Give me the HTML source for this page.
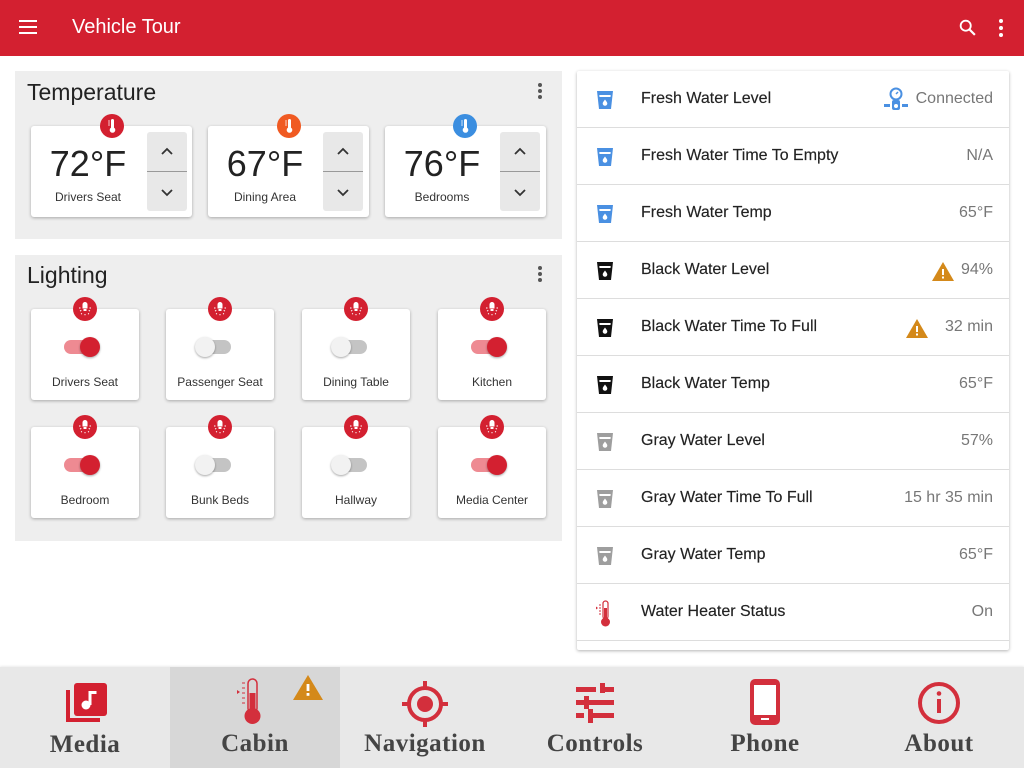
<!DOCTYPE html>
<html><head><style>
*{margin:0;padding:0;box-sizing:border-box}
body{width:1024px;height:768px;overflow:hidden;background:#fff;font-family:"Liberation Sans",sans-serif;position:relative}
.a{position:absolute}
.hdr{left:0;top:0;width:1024px;height:56px;background:#d32030;color:#fff}
.panel{background:#eeeeee}
.card{background:#fff;border-radius:3px;box-shadow:0 1px 3px rgba(0,0,0,.3)}
.badge{width:24px;height:24px;border-radius:50%;display:flex;align-items:center;justify-content:center}
.t{font-size:36px;color:#222;text-align:center}
.lbl{font-size:12px;color:#333;text-align:center}
.step{background:#e8e8e8;border-radius:3px}
.tog{width:32px;height:14px;border-radius:7px}
.knob{width:20px;height:20px;border-radius:50%;box-shadow:0 1px 2px rgba(0,0,0,.35)}
.row{left:577px;width:432px;height:57px;border-bottom:1px solid #ddd}
.rt{left:64px;top:19px;font-size:16px;color:#222;-webkit-text-stroke:.15px #222}
.rv{right:16px;top:19px;font-size:16px;color:#777}
.nav{font-family:"Liberation Serif",serif;font-weight:bold;font-size:25px;color:#444;text-align:center;letter-spacing:.5px}
</style></head><body>
<div class="a hdr">
 <div class="a" style="left:19px;top:20px;width:18px;height:2px;background:#fff;box-shadow:0 6px 0 #fff,0 12px 0 #fff"></div>
 <div class="a" style="left:72px;top:16px;font-size:20px;">Vehicle Tour</div>
 <svg class="a" style="left:957px;top:17px" width="22" height="22" viewBox="0 0 24 24"><circle cx="9.5" cy="9.5" r="5.5" fill="none" stroke="#fff" stroke-width="2"/><path d="M13.5 13.5l6 6" stroke="#fff" stroke-width="2.4"/></svg>
 <svg class="a" style="left:996px;top:18px" width="10" height="20" viewBox="0 0 10 20"><circle cx="5" cy="3" r="2" fill="#fff"/><circle cx="5" cy="10" r="2" fill="#fff"/><circle cx="5" cy="17" r="2" fill="#fff"/></svg>
</div>

<div class="a panel" style="left:15px;top:71px;width:547px;height:168px"></div>
<div class="a" style="left:27px;top:79px;font-size:23px;color:#222">Temperature</div>
<svg class="a" style="left:536px;top:82px" width="8" height="18"><circle cx="4" cy="3" r="2" fill="#555"/><circle cx="4" cy="9" r="2" fill="#555"/><circle cx="4" cy="15" r="2" fill="#555"/></svg>

<div class="a card" style="left:31px;top:126px;width:161px;height:91px"></div>
<div class="a card" style="left:208px;top:126px;width:161px;height:91px"></div>
<div class="a card" style="left:385px;top:126px;width:161px;height:91px"></div>

<div class="a badge" style="left:100px;top:114px;background:#d32030"><svg width="10" height="16" viewBox="0 0 10 16"><rect x="4" y="1" width="3" height="10" rx="1.5" fill="#fff"/><circle cx="5.5" cy="12" r="2.8" fill="#fff"/><path d="M1 3h2M1 5h2M1 7h2" stroke="#fff" stroke-width=".8"/></svg></div>
<div class="a badge" style="left:277px;top:114px;background:#f05a22"><svg width="10" height="16" viewBox="0 0 10 16"><rect x="4" y="1" width="3" height="10" rx="1.5" fill="#fff"/><circle cx="5.5" cy="12" r="2.8" fill="#fff"/><path d="M1 3h2M1 5h2M1 7h2" stroke="#fff" stroke-width=".8"/></svg></div>
<div class="a badge" style="left:453px;top:114px;background:#3b8ee0"><svg width="10" height="16" viewBox="0 0 10 16"><rect x="4" y="1" width="3" height="10" rx="1.5" fill="#fff"/><circle cx="5.5" cy="12" r="2.8" fill="#fff"/><path d="M1 3h2M1 5h2M1 7h2" stroke="#fff" stroke-width=".8"/></svg></div>

<div class="a t" style="left:31px;top:143px;width:114px">72°F</div>
<div class="a lbl" style="left:31px;top:190px;width:114px">Drivers Seat</div>
<div class="a t" style="left:208px;top:143px;width:114px">67°F</div>
<div class="a lbl" style="left:208px;top:190px;width:114px">Dining Area</div>
<div class="a t" style="left:385px;top:143px;width:114px">76°F</div>
<div class="a lbl" style="left:385px;top:190px;width:114px">Bedrooms</div>

<div class="a step" style="left:147px;top:132px;width:40px;height:79px"></div>
<div class="a step" style="left:323px;top:132px;width:40px;height:79px"></div>
<div class="a step" style="left:500px;top:132px;width:40px;height:79px"></div>
<svg class="a" style="left:147px;top:132px" width="40" height="79"><path d="M0 39.5h40" stroke="#999"/><path d="M15 22l5-5 5 5M15 58l5 5 5-5" fill="none" stroke="#333" stroke-width="1.8"/></svg>
<svg class="a" style="left:323px;top:132px" width="40" height="79"><path d="M0 39.5h40" stroke="#999"/><path d="M15 22l5-5 5 5M15 58l5 5 5-5" fill="none" stroke="#333" stroke-width="1.8"/></svg>
<svg class="a" style="left:500px;top:132px" width="40" height="79"><path d="M0 39.5h40" stroke="#999"/><path d="M15 22l5-5 5 5M15 58l5 5 5-5" fill="none" stroke="#333" stroke-width="1.8"/></svg>

<div class="a panel" style="left:15px;top:255px;width:547px;height:286px"></div>
<div class="a" style="left:27px;top:262px;font-size:23px;color:#222">Lighting</div>
<svg class="a" style="left:536px;top:265px" width="8" height="18"><circle cx="4" cy="3" r="2" fill="#555"/><circle cx="4" cy="9" r="2" fill="#555"/><circle cx="4" cy="15" r="2" fill="#555"/></svg>

<div id="lc"></div>
<script>
var xs=[31,166,302,438],ys=[309,427],names=[["Drivers Seat","Passenger Seat","Dining Table","Kitchen"],["Bedroom","Bunk Beds","Hallway","Media Center"]],on=[[1,0,0,1],[1,0,0,1]],h="";
var bulb='<svg width="14" height="14" viewBox="0 0 14 14"><path d="M4.5 2.5a2.5 2.5 0 0 1 5 0v4h-5z" fill="#fff"/><rect x="5.5" y="7" width="3" height="2" fill="#fff"/><path d="M2 9l1.3-.6M12 9l-1.3-.6M3 12l1-.5M11 12l-1-.5M7 12v1.3M1 6h1.5M11.5 6H13" stroke="#fff" stroke-width="1"/></svg>';
for(var r=0;r<2;r++)for(var c=0;c<4;c++){var x=xs[c],y=ys[r],o=on[r][c];
h+='<div class="a card" style="left:'+x+'px;top:'+y+'px;width:108px;height:91px"></div>';
h+='<div class="a badge" style="left:'+(x+42)+'px;top:'+(y-12)+'px;background:#d32030">'+bulb+'</div>';
h+='<div class="a tog" style="left:'+(x+33)+'px;top:'+(y+31)+'px;background:'+(o?'#ee8a92':'#c4c4c4')+'"></div>';
h+='<div class="a knob" style="left:'+(x+(o?49:29))+'px;top:'+(y+28)+'px;background:'+(o?'#d32030':'#f2f2f2')+'"></div>';
h+='<div class="a lbl" style="left:'+x+'px;top:'+(y+66)+'px;width:108px">'+names[r][c]+'</div>';}
document.getElementById("lc").outerHTML=h;
</script>

<div class="a card" style="left:577px;top:71px;width:432px;height:579px;border-radius:2px"></div>
<div id="rows"></div>
<script>
var rows=[["Fresh Water Level","Connected","b",0],["Fresh Water Time To Empty","N/A","b"],["Fresh Water Temp","65°F","b"],["Black Water Level","94%","k",1],["Black Water Time To Full","32 min","k",1],["Black Water Temp","65°F","k"],["Gray Water Level","57%","g"],["Gray Water Time To Full","15 hr 35 min","g"],["Gray Water Temp","65°F","g"],["Water Heater Status","On","t"]];
var col={b:"#4a90e2",k:"#111",g:"#9e9e9e"},h2="";
for(var i=0;i<rows.length;i++){var R=rows[i],y=71+57*i,ic;
if(R[2]=="t")ic='<svg class="a" style="left:17px;top:16px" width="20" height="28" viewBox="0 0 20 28"><rect x="9" y="1" width="5" height="18" rx="2.5" fill="none" stroke="#d32f3c" stroke-width="1.2"/><rect x="10" y="8" width="3" height="12" fill="#d32f3c"/><circle cx="11.5" cy="22" r="4.5" fill="#d32f3c"/><path d="M5 5h2M5 8h2M5 11h2M5 14h2" stroke="#d32f3c" stroke-width="1"/><path d="M2 6.5l2 1.5-2 1.5z" fill="#d32f3c"/></svg>';
else ic='<svg class="a" style="left:19px;top:19px" width="18" height="20" viewBox="0 0 18 20"><path d="M1 1h16l-2 18H3z" fill="'+col[R[2]]+'"/><path d="M3.3 5h11.4l-.2 2H3.5z" fill="#fff"/><path d="M9 9.5c1.5 2 2.3 3 2.3 4a2.3 2.3 0 0 1-4.6 0c0-1 .8-2 2.3-4z" fill="#fff"/></svg>';
h2+='<div class="a row" style="top:'+y+'px">'+ic+'<div class="a rt">'+R[0]+'</div><div class="a rv">'+R[1]+'</div>';
if(R[3]===1)h2+='<svg class="a" style="right:'+(i==3?54:80)+'px;top:19px" width="24" height="21" viewBox="0 0 24 21"><path d="M12 1l11 19H1z" fill="#d4891a"/><rect x="11" y="8" width="2" height="6" fill="#fff"/><rect x="11" y="15.5" width="2" height="2" fill="#fff"/></svg>';
if(R[3]===0)h2+='<svg class="a" style="left:305px;top:14px" width="28" height="28" viewBox="0 0 28 28"><circle cx="14" cy="9" r="5.5" fill="none" stroke="#4a90e2" stroke-width="2"/><path d="M14 9l2-2" stroke="#4a90e2" stroke-width="1.5"/><rect x="10" y="15" width="8" height="10" rx="2" fill="#4a90e2"/><rect x="2" y="19" width="6" height="3" fill="#4a90e2"/><rect x="20" y="19" width="6" height="3" fill="#4a90e2"/><circle cx="14" cy="21" r="2" fill="#fff"/></svg>';
h2+='</div>';}
document.getElementById("rows").outerHTML=h2;
</script>

<div class="a" style="left:0;top:667px;width:1024px;height:101px;background:#e8e8e8;box-shadow:0 -1px 2px rgba(0,0,0,.08)"></div>
<div class="a" style="left:170px;top:667px;width:170px;height:101px;background:#d7d7d7"></div>
<svg class="a" style="left:64px;top:682px" width="44" height="44" viewBox="0 0 44 44"><path d="M2 8v32h34v-4H6V8z" fill="#d32030"/><rect x="10" y="1" width="33" height="33" rx="3" fill="#d32030"/><circle cx="22" cy="23" r="4.5" fill="#fff"/><rect x="24.5" y="9" width="3" height="14" fill="#fff"/><rect x="24.5" y="9" width="8" height="3" fill="#fff"/></svg>
<div class="a nav" style="left:0;top:731px;width:170px">Media</div>
<svg class="a" style="left:236px;top:677px" width="32" height="50" viewBox="0 0 32 50"><rect x="12" y="2" width="9" height="34" rx="4.5" fill="none" stroke="#d32f3c" stroke-width="1.5"/><rect x="13.5" y="16" width="6" height="22" fill="#d32f3c"/><circle cx="16.5" cy="39" r="8" fill="#d32f3c"/><path d="M6 6h3M6 11h3M6 16h3M6 21h3M6 26h3" stroke="#d32f3c" stroke-width="1"/><path d="M1 13l3 2-3 2z" fill="#d32f3c"/></svg>
<svg class="a" style="left:292px;top:674px" width="32" height="27" viewBox="0 0 32 27"><path d="M16 1l15 25H1z" fill="#d4891a"/><rect x="14.6" y="10" width="2.8" height="7" fill="#fff"/><rect x="14.6" y="19" width="2.8" height="2.8" fill="#fff"/></svg>
<div class="a nav" style="left:170px;top:730px;width:170px">Cabin</div>
<svg class="a" style="left:401px;top:680px" width="48" height="48" viewBox="0 0 48 48"><circle cx="24" cy="24" r="16" fill="none" stroke="#d32f3c" stroke-width="4"/><circle cx="24" cy="24" r="8" fill="#d32f3c"/><path d="M24 1v8M24 39v8M1 24h8M39 24h8" stroke="#d32f3c" stroke-width="4"/></svg>
<div class="a nav" style="left:340px;top:730px;width:170px">Navigation</div>
<svg class="a" style="left:574px;top:683px" width="42" height="40" viewBox="0 0 42 40"><g fill="#d32f3c"><rect x="2" y="4" width="20" height="5"/><rect x="26" y="0" width="5" height="10"/><rect x="26" y="4" width="14" height="5"/><rect x="2" y="17" width="8" height="5"/><rect x="10" y="13" width="5" height="13"/><rect x="15" y="17" width="25" height="5"/><rect x="2" y="30" width="8" height="5"/><rect x="14" y="26" width="5" height="14"/><rect x="14" y="30" width="26" height="5"/></g></svg>
<div class="a nav" style="left:510px;top:730px;width:170px">Controls</div>
<svg class="a" style="left:749px;top:679px" width="32" height="46" viewBox="0 0 32 46"><rect x="1" y="0" width="30" height="46" rx="5" fill="#d32f3c"/><rect x="5" y="6" width="22" height="30" fill="#fff"/><rect x="12" y="39" width="8" height="2" fill="#fff"/></svg>
<div class="a nav" style="left:680px;top:730px;width:170px">Phone</div>
<svg class="a" style="left:917px;top:681px" width="44" height="44" viewBox="0 0 44 44"><circle cx="22" cy="22" r="19" fill="none" stroke="#d32f3c" stroke-width="4"/><rect x="20" y="18" width="4" height="14" fill="#d32f3c"/><circle cx="22" cy="12.5" r="2.3" fill="#d32f3c"/></svg>
<div class="a nav" style="left:854px;top:730px;width:170px">About</div>
</body></html>
